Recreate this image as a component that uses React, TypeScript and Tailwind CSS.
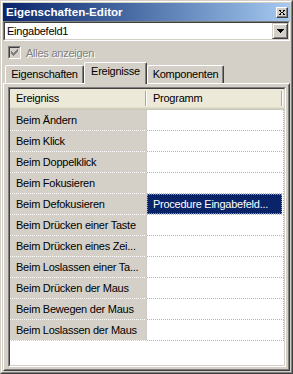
import React from "react";

const events = [
  "Beim Ändern",
  "Beim Klick",
  "Beim Doppelklick",
  "Beim Fokusieren",
  "Beim Defokusieren",
  "Beim Drücken einer Taste",
  "Beim Drücken eines Zei...",
  "Beim Loslassen einer Ta...",
  "Beim Drücken der Maus",
  "Beim Bewegen der Maus",
  "Beim Loslassen der Maus",
];

// selected row -> has a program assigned
const programs: Record<number, string> = { 4: "Procedure Eingabefeld..." };

function Tab({ label, width, active }: { label: string; width: string; active?: boolean }) {
  if (active) {
    return (
      <div
        className={`relative z-10 -mb-px h-[22px] ${width} flex items-start justify-center pt-[3px] bg-[#d4d0c8] border-t border-l border-t-white border-l-white border-r border-r-[#404040] rounded-t-[2px] shadow-[inset_-1px_0_0_#808080]`}
      >
        {label}
      </div>
    );
  }
  return (
    <div
      className={`h-[18px] ${width} flex items-center justify-center bg-[#d4d0c8] border-t border-l border-t-white border-l-white border-r border-r-[#404040] rounded-t-[2px] shadow-[inset_-1px_0_0_#808080]`}
    >
      {label}
    </div>
  );
}

export default function App() {
  return (
    <div className="w-[293px] h-[374px] bg-[#d4d0c8] font-['Liberation_Sans',Arial,sans-serif] text-[11px] tracking-[-0.25px] text-black leading-none select-none">
      <div className="h-full border border-t-[#d4d0c8] border-l-[#d4d0c8] border-r-[#404040] border-b-[#404040]">
        <div className="h-full border border-t-white border-l-white border-r-[#808080] border-b-[#808080] p-px flex flex-col">
          {/* title bar */}
          <div className="h-[18px] shrink-0 flex items-center justify-between pl-[3px] pr-[2px] bg-linear-to-r from-[#0a246a] to-[#a6caf0]">
            <span className="text-white font-bold text-[11.6px] tracking-normal">Eigenschaften-Editor</span>
            <div className="w-[12px] h-[11px] border border-t-white border-l-white border-r-[#404040] border-b-[#404040] bg-[#d4d0c8] shadow-[inset_-1px_-1px_0_#808080] flex items-center justify-center">
              <svg width="6" height="5" viewBox="0 0 6 5" shapeRendering="crispEdges">
                <path d="M0 0h2v1h-2zM4 0h2v1h-2zM1 1h1v1h-1zM4 1h1v1h-1zM2 2h2v1h-2zM1 3h1v1h-1zM4 3h1v1h-1zM0 4h2v1h-2zM4 4h2v1h-2z" fill="#000" />
              </svg>
            </div>
          </div>

          {/* combo box */}
          <div className="h-[20px] shrink-0 border border-t-[#808080] border-l-[#808080] border-b-white border-r-white">
            <div className="h-full border border-t-[#404040] border-l-[#404040] border-b-[#d4d0c8] border-r-[#d4d0c8] bg-white flex items-center">
              <span className="flex-1 pl-[2px]">Eingabefeld1</span>
              <div className="w-[16px] h-full bg-[#d4d0c8] border border-t-[#d4d0c8] border-l-[#d4d0c8] border-r-[#404040] border-b-[#404040] shadow-[inset_1px_1px_0_#fff,inset_-1px_-1px_0_#808080] flex items-center justify-center">
                <svg width="7" height="4" viewBox="0 0 7 4" shapeRendering="crispEdges">
                  <path d="M0 0h7v1h-7zM1 1h5v1h-5zM2 2h3v1h-3zM3 3h1v1h-1z" fill="#000" />
                </svg>
              </div>
            </div>
          </div>

          {/* checkbox */}
          <div className="h-[21px] shrink-0 flex items-start pt-[5px] pl-[5px] gap-[5px]">
            <div className="w-[13px] h-[13px] border border-t-[#808080] border-l-[#808080] border-b-white border-r-white">
              <div className="w-full h-full border border-t-[#404040] border-l-[#404040] border-b-[#d4d0c8] border-r-[#d4d0c8] bg-[#d4d0c8] flex items-center justify-center">
                <svg width="7" height="7" viewBox="0 0 7 7" shapeRendering="crispEdges">
                  <path d="M6 0h1v3h-1zM5 1h1v3h-1zM4 2h1v3h-1zM3 3h1v3h-1zM2 4h1v3h-1zM1 3h1v3h-1zM0 2h1v3h-1z" fill="#808080" />
                </svg>
              </div>
            </div>
            <span className="mt-[2px] text-[#808080] [text-shadow:1px_1px_0_#fff]">Alles anzeigen</span>
          </div>

          {/* tabs */}
          <div className="h-[21px] shrink-0 flex items-end pl-[2px]">
            <Tab label="Eigenschaften" width="w-[79px]" />
            <Tab label="Ereignisse" width="w-[63px]" active />
            <Tab label="Komponenten" width="w-[77px]" />
          </div>

          {/* tab panel */}
          <div className="flex-1 min-h-0 border border-t-white border-l-white border-r-[#404040] border-b-[#404040]">
            <div className="h-full border border-t-[#d4d0c8] border-l-[#d4d0c8] border-r-[#808080] border-b-[#808080] pt-[2px] pl-[3px] pr-[2px] pb-[2px] flex flex-col">
              <div className="flex-1 border border-t-[#808080] border-l-[#808080] border-b-white border-r-white">
                <div className="h-full border border-t-[#404040] border-l-[#404040] border-b-[#d4d0c8] border-r-[#d4d0c8] bg-white flex flex-col">
                  {/* header */}
                  <div className="h-[21px] shrink-0 flex bg-[#ece9d8] shadow-[inset_0_-1px_0_#cbc7b8,inset_0_-2px_0_#d6d2c2,inset_0_-3px_0_#e2decd]">
                    <div className="w-[137px] flex items-center justify-between pl-[6px] pb-[2px]">
                      <span>Ereigniss</span>
                      <div className="w-[2px] h-[15px] border-l border-l-[#aca899] border-r border-r-white" />
                    </div>
                    <div className="w-[137px] flex items-center justify-between pl-[6px] pb-[2px] pr-[1px]">
                      <span>Programm</span>
                      <div className="w-[2px] h-[15px] border-l border-l-[#aca899] border-r border-r-white" />
                    </div>
                  </div>

                  {/* rows */}
                  {events.map((ev, i) => (
                    <div key={ev} className="h-[21px] shrink-0 flex">
                      <div className="w-[137px] bg-[#d4d0c8] flex items-center pl-[6px] border-b border-dotted border-b-white border-r border-r-[#c8c8c8]">
                        {ev}
                      </div>
                      <div className="w-[137px] flex border-b border-dotted border-b-[#b4b4b4] border-r border-r-[#b4b4b4]">
                        {programs[i] ? (
                          <div className="flex-1 mr-px bg-[#0a246a] text-white flex items-center pl-[5px] border border-dotted border-[#8a96b8]">
                            {programs[i]}
                          </div>
                        ) : null}
                      </div>
                    </div>
                  ))}
                </div>
              </div>
            </div>
          </div>
        </div>
      </div>
    </div>
  );
}
